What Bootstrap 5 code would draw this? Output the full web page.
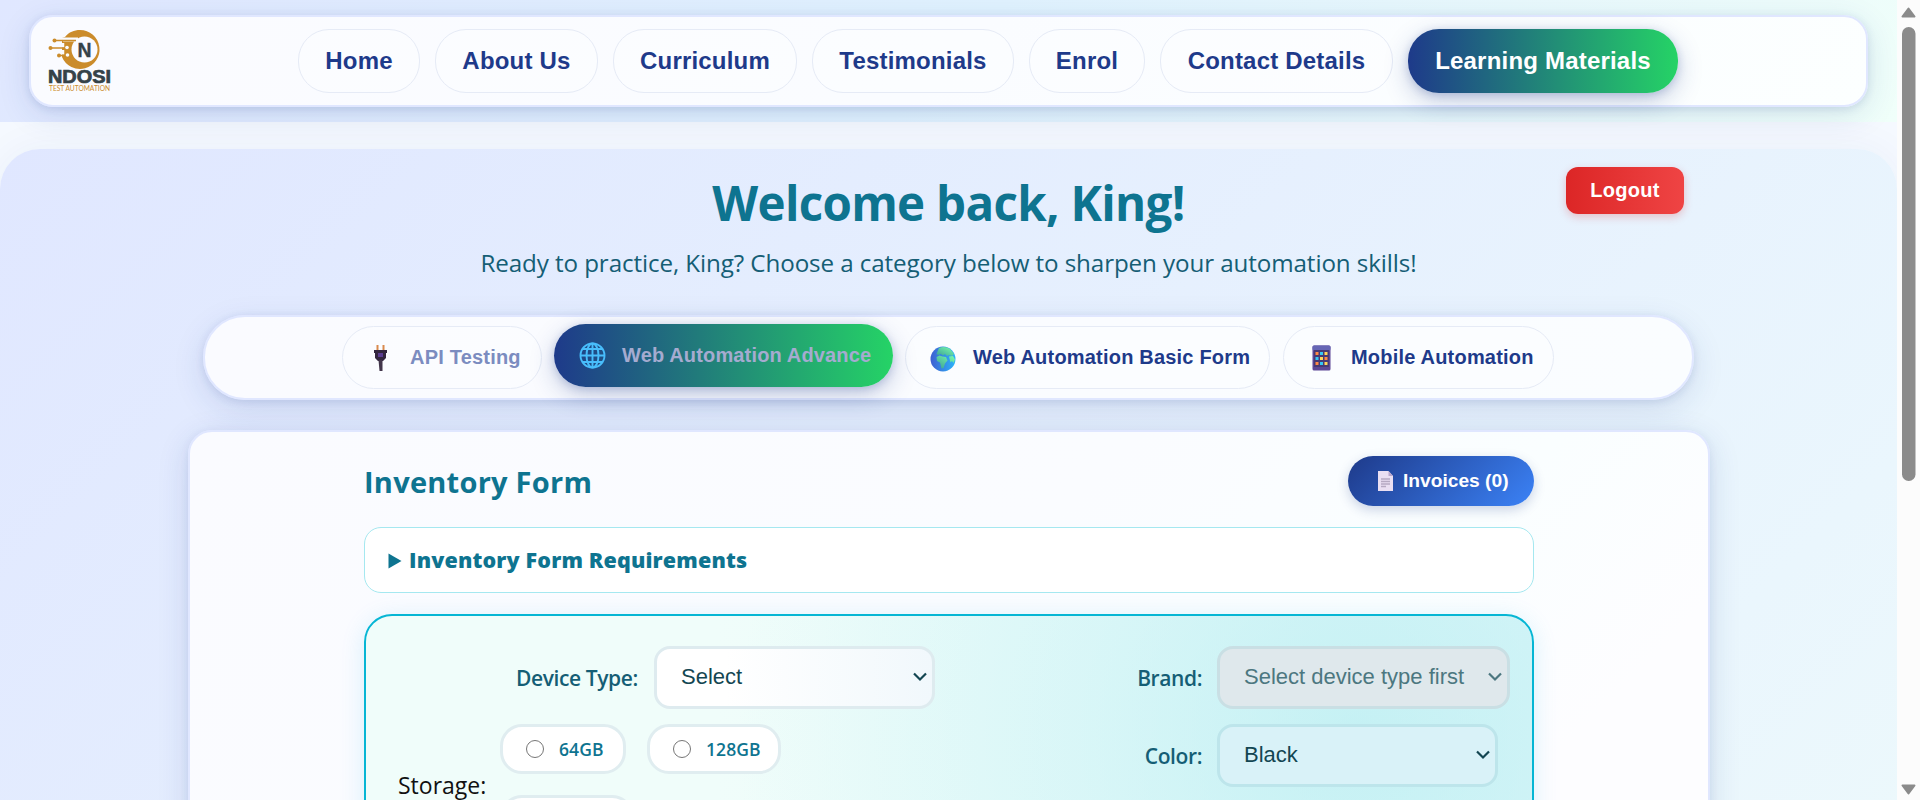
<!DOCTYPE html>
<html lang="en">
<head>
<meta charset="utf-8">
<meta name="viewport" content="width=device-width, initial-scale=1">
<title>Ndosi Test Automation - Learning Materials</title>
<link href="https://cdn.jsdelivr.net/npm/bootstrap@5.3.0/dist/css/bootstrap.min.css" rel="stylesheet">
<style>
html,body{height:800px;overflow:hidden}
body{font-family:"Open Sans","Noto Sans",sans-serif;background:#f5f9ff;color:#155e75}
.page{height:800px;overflow:hidden}
.view{width:1897px;height:800px;overflow:hidden}
.arial{font-family:"Liberation Sans",Arial,sans-serif}
.site-top{height:122px;padding:15px 29px 0 29px;background:linear-gradient(135deg,#e0e7ff 0%,#e0f2fe 50%,#f0fffa 100%);position:relative}
.top-card{height:92px;border:2px solid #e0e7ff;border-radius:24px;background:linear-gradient(135deg,#fafbff,#fafcff 50%,#fcffff);box-shadow:0 8px 32px rgba(30,58,138,.13),0 2px 8px rgba(30,58,138,.13);padding:0 0 0 18px}
.top-card svg{overflow:visible}
.pill-nav{margin-left:186px;gap:15px}
.pill-nav .nav-link{height:64px;line-height:62px;padding:0;text-align:center;border:1px solid #e6ebf6;border-radius:31px;font-weight:700;font-size:24px;letter-spacing:.2px;color:#1e3a8a;background:rgba(255,255,255,.3);white-space:nowrap}
.pill-nav .nav-link.on,.tab-btn.on{background:linear-gradient(90deg,#1e3a8a,#25d366);border:0;color:#fff;box-shadow:0 8px 24px rgba(30,58,138,.25),0 2px 8px rgba(30,58,138,.2)}
.pill-nav .nav-link.on{line-height:64px}
.hero{margin-top:27px;height:1500px;border-radius:40px 40px 0 0;background:linear-gradient(135deg,#e0e7ff 0%,#eaf6fd 65%,#f0fdf9 100%);box-shadow:0 0 40px rgba(30,58,138,.05);position:relative}
.hero h1{font-size:47.500px;font-weight:700;color:#0e7490;line-height:60px;margin:0;padding-top:24px;letter-spacing:-.7px}
.sub{font-size:24.200px;line-height:34px;margin:13px 0 0;letter-spacing:-.1px}
.logout{right:213px;top:18px;width:118px;height:47px;border:0;border-radius:12px;background:linear-gradient(90deg,#dc2626,#ef4444);color:#fff;font-weight:700;font-size:20px;letter-spacing:.3px;box-shadow:0 3px 8px rgba(220,38,38,.25);padding-bottom:3px}
.tabs-card{width:1491px;height:85px;margin:35px 0 0 203px;border:2px solid #e0e7ff;border-radius:42px;background:linear-gradient(90deg,#fafbff,#fafcff 60%,#fafdff);box-shadow:0 10px 32px rgba(30,58,138,.13),0 2px 8px rgba(30,58,138,.12);gap:12px;padding:0 0 0 137px}
.tab-btn{height:63px;border:1px solid #e6ebf6;border-radius:32px;background:rgba(255,255,255,.3);color:#1e3a8a;font-weight:700;font-size:20px;letter-spacing:.2px;white-space:nowrap;padding:0 0 2px}
.tab-btn svg{flex:none;position:relative;top:1px}
.tab-btn.on{color:#a5abd0;position:relative;top:-2px;letter-spacing:.15px}
.dim{color:#7b8cc0}
.main-card{width:1522px;height:600px;margin:30px 0 0 188px;border:2px solid #e0e7ff;border-radius:24px;background:linear-gradient(135deg,#fafbff,#fafcff 45%,#fafeff 65%,#fdfdff 80%);box-shadow:0 8px 32px rgba(30,58,138,.14),0 2px 8px rgba(30,58,138,.08);padding:24px 174px 0}
.main-card h2{font-size:29px;font-weight:700;color:#0e7490;letter-spacing:.25px;margin:0;line-height:51px}
.invoices{width:186px;height:50px;border:0;border-radius:25px;background:linear-gradient(135deg,#1e3a8a,#3b82f6);color:#fff;font-weight:700;font-size:19.200px;box-shadow:0 4px 12px rgba(30,58,138,.22);padding:0 0 0 29px}
.req{height:66px;border:1px solid #a5e8f0;border-radius:17px;background:#fff;margin-top:20px;padding:0 0 0 23px;color:#0e7490;font-weight:800;font-size:21.500px;letter-spacing:.15px}
.inv-form{height:400px;margin-top:21px;border:2px solid #06b6d4;border-radius:28px;padding:30px 0 0 32px;background:radial-gradient(circle 620px at 992px 118px,rgba(178,236,240,.62) 0%,rgba(190,240,243,.38) 45%,rgba(200,243,245,0) 100%),linear-gradient(90deg,#f0fdfa 0%,#f0fdfa 30%,#e0f7fa 100%);box-shadow:0 4px 24px rgba(14,165,233,.14)}
.inv-form label{font-weight:600;font-size:21px;white-space:nowrap;letter-spacing:-.4px;padding-top:2px}
.left-col{flex:none;width:672px}
.fake-select{height:63px;border:3px solid #deebef;border-radius:16px;background-color:#fff;font-size:22px;color:#134652;padding:0 4px 2px 24px}
.storage{color:#111;font-size:23px;width:102px;margin-top:44px}
.opt{height:50px;border:3px solid #e0edf0;border-radius:22px;background:#fff;color:#0e7490;font-size:17.500px;font-weight:600;padding-left:23px;letter-spacing:.1px}
.ring{width:18px;height:18px;border:1.500px solid #767676;border-radius:50%;margin-right:15px;background:#fff}
.sbar{width:23px;height:800px;background:#fcfcfc}
</style>
</head>
<body>
<div class="page d-flex">
<div class="view">
 <header class="site-top z-1">
  <nav class="top-card d-flex align-items-center arial">
   <svg width="63" height="64" viewBox="0 0 63 64" aria-label="Ndosi Test Automation">
    <path d="M16 8C20 3 25 1 31 1a19.500 19.500 0 1 1-18 27V9z" fill="#cb8c2b"/>
    <path d="M10 8.500h19v4H14v-1z" fill="#fafbff"/>
    <circle cx="35.500" cy="20.500" r="13" fill="#fafbff"/>
    <path d="M14 14v4.500M14 21v4.500" stroke="#fafbff" stroke-width="2.500"/>
    <path d="M5 11.500h22M2 19h16M10 26.500h9" stroke="#cb8c2b" stroke-width="1.700"/>
    <circle cx="5.500" cy="11.500" r="2" fill="#cb8c2b"/><circle cx="1.500" cy="19" r="2" fill="#cb8c2b"/><circle cx="10" cy="26.500" r="2" fill="#cb8c2b"/><circle cx="18" cy="18.500" r="1.800" fill="#fafbff"/><circle cx="18.500" cy="26" r="1.800" fill="#fafbff"/>
    <text x="35.500" y="28" text-anchor="middle" font-family="Liberation Sans" font-weight="700" font-size="20.500" fill="#354248" stroke="#354248" stroke-width=".4" textLength="14" lengthAdjust="spacingAndGlyphs">N</text>
    <text x="-1" y="54" font-family="Liberation Sans" font-weight="700" font-size="18" fill="#354248" stroke="#354248" stroke-width=".7" textLength="63" lengthAdjust="spacingAndGlyphs">NDOSI</text>
    <text x="0" y="62" font-family="Lato" font-size="7.200" fill="#cb8c2b" textLength="61" lengthAdjust="spacingAndGlyphs">TEST AUTOMATION</text>
   </svg>
   <div class="nav pill-nav flex-nowrap">
    <a class="nav-link" style="width:122px">Home</a>
    <a class="nav-link" style="width:163px">About Us</a>
    <a class="nav-link" style="width:184px">Curriculum</a>
    <a class="nav-link" style="width:202px">Testimonials</a>
    <a class="nav-link" style="width:116px">Enrol</a>
    <a class="nav-link" style="width:233px">Contact Details</a>
    <a class="nav-link on" style="width:270px">Learning Materials</a>
   </div>
  </nav>
 </header>
 <main class="hero">
  <button class="logout position-absolute arial">Logout</button>
  <h1 class="text-center">Welcome back, King!</h1>
  <p class="sub text-center">Ready to practice, King? Choose a category below to sharpen your automation skills!</p>
  <div class="tabs-card d-flex align-items-center arial">
   <button class="tab-btn dim d-flex align-items-center" style="width:200px">
    <svg style="margin:0 22px 0 30px" width="15" height="28" viewBox="0 0 15 28"><path d="M4.500 1v6M10.500 1v6" stroke="#d98a4e" stroke-width="2"/><path d="M1 6h13v3h-1v5l-3 3H5l-3-3V9H1z" fill="#33263f"/><path d="M5 9h5v4H5z" fill="#5b3d91"/><path d="M5.500 16h4v11h-3z" fill="#42354a"/></svg>API Testing</button>
   <button class="tab-btn on d-flex align-items-center" style="width:339px">
    <svg style="margin:0 16px 0 25px" width="27" height="27" viewBox="0 0 27 27" fill="none" stroke="#48bdfb" stroke-width="1.900"><circle cx="13.500" cy="13.500" r="12"/><ellipse cx="13.500" cy="13.500" rx="6" ry="12"/><path d="M13.500 1v25M1 13.500h25M3.500 7h20M3.500 20h20"/></svg>Web Automation Advance</button>
   <button class="tab-btn d-flex align-items-center" style="width:365px">
    <svg style="margin:2px 17px 0 24px" width="26" height="26" viewBox="0 0 26 26"><defs><linearGradient id="sea" x1="0" y1="0" x2="1" y2="0"><stop stop-color="#3e5ed0"/><stop offset="1" stop-color="#2cb5fa"/></linearGradient><linearGradient id="land" x1="0" y1="1" x2="1" y2="0"><stop stop-color="#3a9f96"/><stop offset="1" stop-color="#7dffab"/></linearGradient></defs><circle cx="13" cy="13" r="12.500" fill="url(#sea)"/><path d="M9 2c4-2 8-1 11 1l4 5-2 2-3-1-2 1-2-2-2 1.500-2-1.500-3 1-1.500-1z" fill="url(#land)"/><path d="M6.500 11l3-1.500 3 1 3.500.500 1.500 3.500-2.500 3-1.500 4.500-2 .500-1.500-6-3-1.500zM19 10.500l4-.500 2 3.500-1.500 3.500-1.500-2-1.500 1.500z" fill="url(#land)"/></svg>Web Automation Basic Form</button>
   <button class="tab-btn d-flex align-items-center" style="width:271px;margin-left:1px">
    <svg style="margin:0 20px 0 28px" width="19" height="26" viewBox="0 0 19 26"><rect x=".5" y=".5" width="18" height="25" rx="1.500" fill="#5d4795"/><rect x=".5" y=".5" width="18" height="5" rx="1.500" fill="#6666b5"/><rect x="2" y="5" width="15" height="17" fill="#473a75"/><g fill="#ff8a45"><path d="M3.500 7h3v3h-3zM12.500 12h3v3h-3zM3.500 17h3v3h-3z"/></g><g fill="#35c8f5"><path d="M8 7h3v3H8zM3.500 12h3v3h-3zM8 17h3v3H8z"/></g><g fill="#ffd45a"><path d="M12.500 7h3v3h-3zM8 12h3v3H8zM12.500 17h3v3h-3z"/></g></svg>Mobile Automation</button>
  </div>
  <section class="main-card">
   <div class="d-flex justify-content-between">
    <h2>Inventory Form</h2>
    <button class="invoices arial d-flex align-items-center">
     <svg class="me-2" width="18" height="22" viewBox="0 0 18 22"><path d="M1 1h10.500l4.500 5v15H1z" fill="#eadff2"/><path d="M11.500 1v5H16z" fill="#b9a7cc"/><path d="M4 9h9M4 11.500h9M4 14h9M4 16.500h5" stroke="#b6a9c2" stroke-width="1.400"/></svg>Invoices (0)</button>
   </div>
   <div class="req d-flex align-items-center">
    <svg width="14" height="16" viewBox="0 0 14 16" style="margin:1px 7px 0 0"><path d="M.5 .5l13 7.500-13 7.500z" fill="#0e7490"/></svg>Inventory Form Requirements
   </div>
   <form class="inv-form">
    <div class="d-flex">
     <div class="left-col">
      <div class="d-flex align-items-center" style="padding-left:118px">
       <label style="width:138px">Device Type:</label>
       <div class="fake-select arial d-flex align-items-center justify-content-between" style="width:281px;background-image:linear-gradient(90deg,#fff 25%,#f1f8fc)">Select<svg width="16" height="10" viewBox="0 0 16 10" fill="none" stroke="#134652" stroke-width="2.200"><path d="M2 1.500l6 6 6-6"/></svg></div>
      </div>
      <div class="d-flex" style="margin-top:15px">
       <div class="storage">Storage:</div>
       <div class="d-flex flex-wrap align-content-start" style="gap:21px;width:320px">
        <div class="opt d-flex align-items-center" style="width:126px"><i class="ring"></i>64GB</div>
        <div class="opt d-flex align-items-center" style="width:134px"><i class="ring"></i>128GB</div>
        <div class="opt d-flex align-items-center" style="width:134px"><i class="ring"></i>256GB</div>
       </div>
      </div>
     </div>
     <div>
      <div class="d-flex align-items-center">
       <label class="text-end" style="width:132px;margin-right:15px">Brand:</label>
       <div class="fake-select arial d-flex align-items-center justify-content-between" style="width:293px;background-color:#dfe8ec;border-color:#c9dfe4;color:#4c7780">Select device type first<svg width="16" height="10" viewBox="0 0 16 10" fill="none" stroke="#4c7780" stroke-width="2.200"><path d="M2 1.500l6 6 6-6"/></svg></div>
      </div>
      <div class="d-flex align-items-center" style="margin-top:15px">
       <label class="text-end" style="width:132px;margin-right:15px">Color:</label>
       <div class="fake-select arial d-flex align-items-center justify-content-between" style="width:281px;background-color:#d9f2f8;border-color:#bde5eb">Black<svg width="16" height="10" viewBox="0 0 16 10" fill="none" stroke="#134652" stroke-width="2.200"><path d="M2 1.500l6 6 6-6"/></svg></div>
      </div>
     </div>
    </div>
   </form>
  </section>
 </main>
</div>
<div class="sbar"><svg class="d-block" width="23" height="800" viewBox="0 0 23 800" fill="#8b8b8b"><path d="M11.500 8.500l6 8h-12z" stroke="#8b8b8b" stroke-width="2" stroke-linejoin="round"/><rect x="5" y="27" width="13.500" height="454" rx="6.700"/><path d="M11.500 793.500l6-8h-12z" stroke="#8b8b8b" stroke-width="2" stroke-linejoin="round"/></svg></div>
</div>
<script src="https://cdn.jsdelivr.net/npm/bootstrap@5.3.0/dist/js/bootstrap.bundle.min.js"></script>
</body>
</html>
